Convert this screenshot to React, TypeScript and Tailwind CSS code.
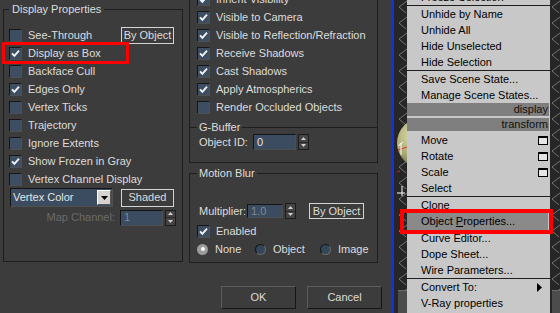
import type { ReactNode } from 'react'

const PANEL = 'bg-[#3c3c3c]'

function Check({ on }: { on?: boolean }) {
  return (
    <span className="flex h-[13px] w-[13px] shrink-0 items-center justify-center border border-t-[#161616] border-l-[#161616] border-b-[#505050] border-r-[#505050] bg-[#3d4e62]">
      {on && (
        <svg width="9" height="9" viewBox="0 0 9 9" aria-hidden>
          <path d="M1 4.3 L3.4 6.8 L8 1.6" stroke="#f2f2f2" strokeWidth="1.9" fill="none" />
        </svg>
      )}
    </span>
  )
}

function CheckRow({ label, on }: { label: string; on?: boolean }) {
  return (
    <div className="flex h-[18px] items-center gap-[6px]">
      <Check on={on} />
      <span className="whitespace-nowrap">{label}</span>
    </div>
  )
}

function Btn({ children, className = '' }: { children: ReactNode; className?: string }) {
  return (
    <span className={`flex items-center justify-center border border-[#d4d4d4] bg-[#3c3c3c] ${className}`}>
      {children}
    </span>
  )
}

function Field({ children, className = '', dim }: { children: ReactNode; className?: string; dim?: boolean }) {
  return (
    <span
      className={`flex items-center border border-t-[#141414] border-l-[#141414] border-b-[#4e4e4e] border-r-[#4e4e4e] bg-[#3b4c60] pl-[3px] ${
        dim ? 'text-[#7d8894]' : 'text-[#e4e4e4]'
      } ${className}`}
    >
      {children}
    </span>
  )
}

function Spinner({ className = '' }: { className?: string }) {
  return (
    <span className={`flex h-[16px] w-[11px] flex-col border border-[#1c1c1c] bg-[#444] ${className}`}>
      <span className="flex flex-1 items-center justify-center border-b border-[#2a2a2a]">
        <svg width="5" height="3" viewBox="0 0 5 3" aria-hidden>
          <path d="M0 3 L2.5 0 L5 3Z" fill="#d0d0d0" />
        </svg>
      </span>
      <span className="flex flex-1 items-center justify-center">
        <svg width="5" height="3" viewBox="0 0 5 3" aria-hidden>
          <path d="M0 0 L2.5 3 L5 0Z" fill="#d0d0d0" />
        </svg>
      </span>
    </span>
  )
}

function Radio({ on }: { on?: boolean }) {
  return on ? (
    <span className="flex h-[11px] w-[11px] shrink-0 items-center justify-center rounded-full bg-[#9c9c9c]">
      <span className="h-[4px] w-[4px] rounded-full bg-white" />
    </span>
  ) : (
    <span className="h-[11px] w-[11px] shrink-0 rounded-full border border-t-[#151515] border-l-[#151515] border-b-[#6a6a6a] border-r-[#6a6a6a] bg-[#34465a]" />
  )
}

function Wire({ w, block }: { w: number; block: [number, number] }) {
  return (
    <svg width={w} height="313" className="block" aria-hidden>
      <rect width={w} height="313" fill="#262626" />
      {Array.from({ length: 20 }, (_, i) => (
        <path
          key={i}
          d={`M${w} ${i * 16 + 1} L${w - 8} ${i * 16 + 7} L${w - 1} ${i * 16 + 13}`}
          stroke="#747474"
          strokeWidth="1"
          fill="none"
        />
      ))}
      <rect x={block[0]} y="290" width={w - block[0]} height="23" fill="#4c4c4c" />
      <rect x={block[0]} y="290" width={w - block[0]} height="1" fill="#6a6a6a" />
    </svg>
  )
}

function Viewport() {
  return (
    <svg width="13" height="313" className="block" aria-hidden>
      <defs>
        <radialGradient id="ball" cx="0.35" cy="0.35" r="0.7">
          <stop offset="0" stopColor="#e3e3b0" />
          <stop offset="0.6" stopColor="#a9a873" />
          <stop offset="1" stopColor="#5e5d35" />
        </radialGradient>
      </defs>
      <rect width="13" height="313" fill="#262626" />
      {Array.from({ length: 20 }, (_, i) => (
        <path
          key={i}
          d={`M13 ${i * 16 + 1} L5 ${i * 16 + 7} L12 ${i * 16 + 13}`}
          stroke="#747474"
          strokeWidth="1"
          fill="none"
        />
      ))}
      <circle cx="28" cy="143" r="25" fill="url(#ball)" />
      <path d="M4 150 L13 147" stroke="#d33" strokeWidth="1" />
      <path d="M4 146 L9 142 M7 143 L7 155" stroke="#fff" strokeWidth="1" fill="none" />
      <path d="M3 172 L6 171" stroke="#c22" strokeWidth="1" />
      <path d="M8 186 L8 196 M3 193 L11 193" stroke="#fff" strokeWidth="1" fill="none" />
      <rect x="4" y="290" width="9" height="23" fill="#4c4c4c" />
      <rect x="4" y="290" width="9" height="1" fill="#6a6a6a" />
    </svg>
  )
}

function MI({ children, right, className = '' }: { children: ReactNode; right?: ReactNode; className?: string }) {
  return (
    <div className={`flex h-[16px] shrink-0 items-center pl-[14px] ${className}`}>
      <span className="whitespace-nowrap">{children}</span>
      {right}
    </div>
  )
}

const Sep = () => <div className="h-[1px] shrink-0 bg-[#1e1e1e]" />

const WinIcon = () => (
  <span className="ml-auto mr-[2px] h-[9px] w-[10px] border border-t-2 border-black bg-[#e4e4e4]" />
)

export default function App() {
  return (
    <div className="relative flex h-[313px] w-[560px] overflow-hidden font-['Liberation_Sans',Arial,sans-serif] text-[11px] leading-[13px]">
      {/* dialog */}
      <div className={`flex w-[392px] shrink-0 flex-col ${PANEL} text-[#dcdcdc]`}>
        <div className="flex items-start">
          <div className="ml-[3px] mt-[9px] flex h-[253px] w-[180px] flex-col border border-[#1e1e1e] pl-[5px] pr-[8px]">
            <span className={`-mt-[7px] w-fit px-[3px] ${PANEL}`}>Display Properties</span>
            <div className="mt-[10px] flex flex-col">
              <div className="flex items-center justify-between">
                <CheckRow label="See-Through" />
                <Btn className="h-[17px] w-[53px]">By Object</Btn>
              </div>
              <CheckRow label="Display as Box" on />
              <CheckRow label="Backface Cull" />
              <CheckRow label="Edges Only" on />
              <CheckRow label="Vertex Ticks" />
              <CheckRow label="Trajectory" />
              <CheckRow label="Ignore Extents" />
              <CheckRow label="Show Frozen in Gray" on />
              <CheckRow label="Vertex Channel Display" />
              <div className="flex h-[19px] items-center justify-between">
                <span className="ml-[1px] flex h-[19px] w-[103px] items-center border border-t-[#141414] border-l-[#141414] border-b-[#505050] border-r-[#505050] bg-[#3b4c60] pl-[2px] text-[#e4e4e4]">
                  Vertex Color
                  <span className="ml-auto mr-[1px] flex h-[15px] w-[14px] items-center justify-center border border-t-white border-l-white border-b-[#555] border-r-[#555] bg-[#d6d3ce]">
                    <svg width="7" height="4" viewBox="0 0 7 4" aria-hidden>
                      <path d="M0 0 L7 0 L3.5 4Z" fill="#000" />
                    </svg>
                  </span>
                </span>
                <Btn className="h-[18px] w-[53px]">Shaded</Btn>
              </div>
              <div className="-mr-[2px] mt-[2px] flex h-[17px] items-center justify-end">
                <span className="text-[#6a6a6a]">Map Channel:</span>
                <Field className="ml-[5px] h-[16px] w-[43px]" dim>
                  1
                </Field>
                <Spinner className="ml-[2px]" />
              </div>
            </div>
          </div>

          <div className="ml-[6px] flex w-[189px] flex-col">
            <div className="-mt-[10px] flex flex-col border-x border-b border-[#1e1e1e]">
              <div className="flex flex-col pl-[7px]">
                <CheckRow label="Inherit Visibility" on />
                <CheckRow label="Visible to Camera" on />
                <CheckRow label="Visible to Reflection/Refraction" on />
                <CheckRow label="Receive Shadows" on />
                <CheckRow label="Cast Shadows" on />
                <CheckRow label="Apply Atmospherics" on />
                <CheckRow label="Render Occluded Objects" />
              </div>
              <div className="mt-[11px] flex flex-col border-t border-[#1e1e1e] pb-[12px] pl-[7px]">
                <span className={`-mt-[7px] w-fit px-[2px] ${PANEL}`}>G-Buffer</span>
                <div className="flex h-[16px] items-center">
                  <span className="ml-[2px] w-[54px] whitespace-nowrap">Object ID:</span>
                  <Field className="h-[16px] w-[43px]">0</Field>
                  <Spinner className="ml-[2px]" />
                </div>
              </div>
            </div>

            <div className="mt-[10px] flex flex-col border border-[#1e1e1e] pb-[4px] pl-[7px]">
              <span className={`-mt-[7px] w-fit px-[2px] ${PANEL}`}>Motion Blur</span>
              <div className="mt-[23px] flex h-[16px] items-center">
                <span className="ml-[2px] w-[48px] whitespace-nowrap">Multiplier:</span>
                <Field className="h-[14px] w-[36px]" dim>
                  1.0
                </Field>
                <Spinner className="ml-[2px]" />
                <Btn className="ml-[13px] h-[16px] w-[55px]">By Object</Btn>
              </div>
              <div className="mt-[3px]">
                <CheckRow label="Enabled" on />
              </div>
              <div className="flex h-[18px] items-center">
                <span className="flex w-[58px] items-center gap-[7px]">
                  <Radio on />
                  None
                </span>
                <span className="flex w-[65px] items-center gap-[7px]">
                  <Radio />
                  Object
                </span>
                <span className="flex items-center gap-[7px]">
                  <Radio />
                  Image
                </span>
              </div>
            </div>
          </div>
        </div>

        <div className="mt-[23px] flex justify-end gap-[11px] pr-[10px]">
          <span className="flex h-[23px] w-[75px] items-center justify-center border border-t-[#5c5c5c] border-l-[#5c5c5c] border-b-[#161616] border-r-[#161616]">
            OK
          </span>
          <span className="flex h-[23px] w-[75px] items-center justify-center border border-t-[#5c5c5c] border-l-[#5c5c5c] border-b-[#161616] border-r-[#161616]">
            Cancel
          </span>
        </div>
      </div>

      <div className="w-[2px] shrink-0 bg-[#1230e6]" />
      <div className="w-[13px] shrink-0">
        <Viewport />
      </div>

      {/* quad menu */}
      <div className="flex w-[143px] shrink-0 flex-col bg-[#c8c8c8] text-black">
        <MI className="-mt-[11px]">Freeze Selection</MI>
        <Sep />
        <MI>Unhide by Name</MI>
        <MI>Unhide All</MI>
        <MI>Hide Unselected</MI>
        <MI>Hide Selection</MI>
        <Sep />
        <MI>Save Scene State...</MI>
        <MI>Manage Scene States...</MI>
        <div className="mr-[1px] flex h-[13px] shrink-0 items-center justify-end bg-[#7f7f7f] pr-[1px] text-[#111]">
          display
        </div>
        <div className="mr-[1px] mt-[2px] flex h-[13px] shrink-0 items-center justify-end bg-[#7f7f7f] pr-[1px] text-[#111]">
          transform
        </div>
        <div className="h-[1px] shrink-0" />
        <MI right={<WinIcon />}>Move</MI>
        <MI right={<WinIcon />}>Rotate</MI>
        <MI right={<WinIcon />}>Scale</MI>
        <MI>Select</MI>
        <Sep />
        <MI>Clone</MI>
        <MI className="mr-[2px] h-[17px] bg-[#8a8a8a]">
          Object <span className="underline">P</span>roperties...
        </MI>
        <MI>Curve Editor...</MI>
        <MI>Dope Sheet...</MI>
        <MI>Wire Parameters...</MI>
        <Sep />
        <MI
          right={
            <svg className="ml-auto mr-[8px]" width="5" height="9" viewBox="0 0 5 9" aria-hidden>
              <path d="M0 0 L5 4.5 L0 9Z" fill="#000" />
            </svg>
          }
        >
          Convert To:
        </MI>
        <MI>V-Ray properties</MI>
      </div>

      <div className="w-[10px] shrink-0">
        <Wire w={10} block={[2, 0]} />
      </div>

      {/* annotation boxes */}
      <div className="pointer-events-none absolute left-[2px] top-[42px] h-[22px] w-[127px] border-[3px] border-[#ff0000]" />
      <div className="pointer-events-none absolute left-[400px] top-[209px] h-[25px] w-[153px] border-4 border-[#ff0000]" />
    </div>
  )
}
